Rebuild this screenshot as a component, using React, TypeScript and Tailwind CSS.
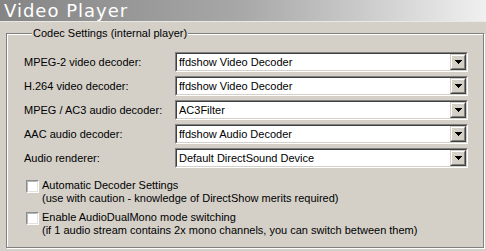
import React from "react";

const rows = [
  { label: "MPEG-2 video decoder:", value: "ffdshow Video Decoder" },
  { label: "H.264 video decoder:", value: "ffdshow Video Decoder" },
  { label: "MPEG / AC3 audio decoder:", value: "AC3Filter" },
  { label: "AAC audio decoder:", value: "ffdshow Audio Decoder" },
  { label: "Audio renderer:", value: "Default DirectSound Device" },
];

function Arrow() {
  return (
    <svg width="7" height="4" viewBox="0 0 7 4" shapeRendering="crispEdges">
      <rect x="0" y="0" width="7" height="1" fill="#000" />
      <rect x="1" y="1" width="5" height="1" fill="#000" />
      <rect x="2" y="2" width="3" height="1" fill="#000" />
      <rect x="3" y="3" width="1" height="1" fill="#000" />
    </svg>
  );
}

function Combo({ value }: { value: string }) {
  return (
    <div className="w-[293px] h-[20px] border border-t-[#808080] border-l-[#808080] border-r-white border-b-white">
      <div className="h-full flex border border-t-[#404040] border-l-[#404040] border-r-[#d4d0c8] border-b-[#d4d0c8] bg-white">
        <span className="flex-1 pl-[2px] leading-[16px] truncate">{value}</span>
        <div className="w-[16px] h-full border border-t-[#d4d0c8] border-l-[#d4d0c8] border-r-[#404040] border-b-[#404040] bg-[#d4d0c8]">
          <div className="h-full flex items-center justify-center border border-t-white border-l-white border-r-[#808080] border-b-[#808080]">
            <Arrow />
          </div>
        </div>
      </div>
    </div>
  );
}

function Check({ title, note }: { title: string; note: string }) {
  return (
    <div className="flex items-start gap-[3px]">
      <div className="mt-[1px] w-[13px] h-[13px] border border-t-[#8c8c8c] border-l-[#8c8c8c] border-r-white border-b-white">
        <div className="w-full h-full bg-white border border-t-[#b8b8b8] border-l-[#b8b8b8] border-r-[#e4e2dc] border-b-[#e4e2dc]" />
      </div>
      <div className="leading-[13px]">
        <div>{title}</div>
        <div>{note}</div>
      </div>
    </div>
  );
}

export default function App() {
  return (
    <div className="w-[486px] h-[251px] bg-[#d4d0c8] text-black text-[11px] font-['Liberation_Sans',Arial,sans-serif] overflow-hidden">
      <div className="h-[22px] bg-linear-to-r from-[#858585] via-[#a8a8a8] to-[#f0f0f0] border-b border-[#ebe9e4] pl-[4px]">
        <span className="font-['DejaVu_Sans',Verdana,sans-serif] text-[18px] leading-[21px] tracking-[1px] text-white">
          Video Player
        </span>
      </div>
      <fieldset className="ml-[6px] mt-[5px] w-[478px] h-[221px] border border-[#808080] shadow-[inset_1px_1px_0_#fff,1px_1px_0_#fff] pl-[17px] pt-[12px]">
        <legend className="ml-[8px] px-[1px] leading-[13px] bg-[#d4d0c8]">
          Codec Settings (internal player)
        </legend>
        <div className="flex flex-col gap-[4px]">
          {rows.map((r) => (
            <div key={r.label} className="flex items-center">
              <span className="w-[151px]">{r.label}</span>
              <Combo value={r.value} />
            </div>
          ))}
        </div>
        <div className="mt-[11px] pl-[2px] flex flex-col gap-[6px]">
          <Check
            title="Automatic Decoder Settings"
            note="(use with caution - knowledge of DirectShow merits required)"
          />
          <Check
            title="Enable AudioDualMono mode switching"
            note="(if 1 audio stream contains 2x mono channels, you can switch between them)"
          />
        </div>
      </fieldset>
    </div>
  );
}
